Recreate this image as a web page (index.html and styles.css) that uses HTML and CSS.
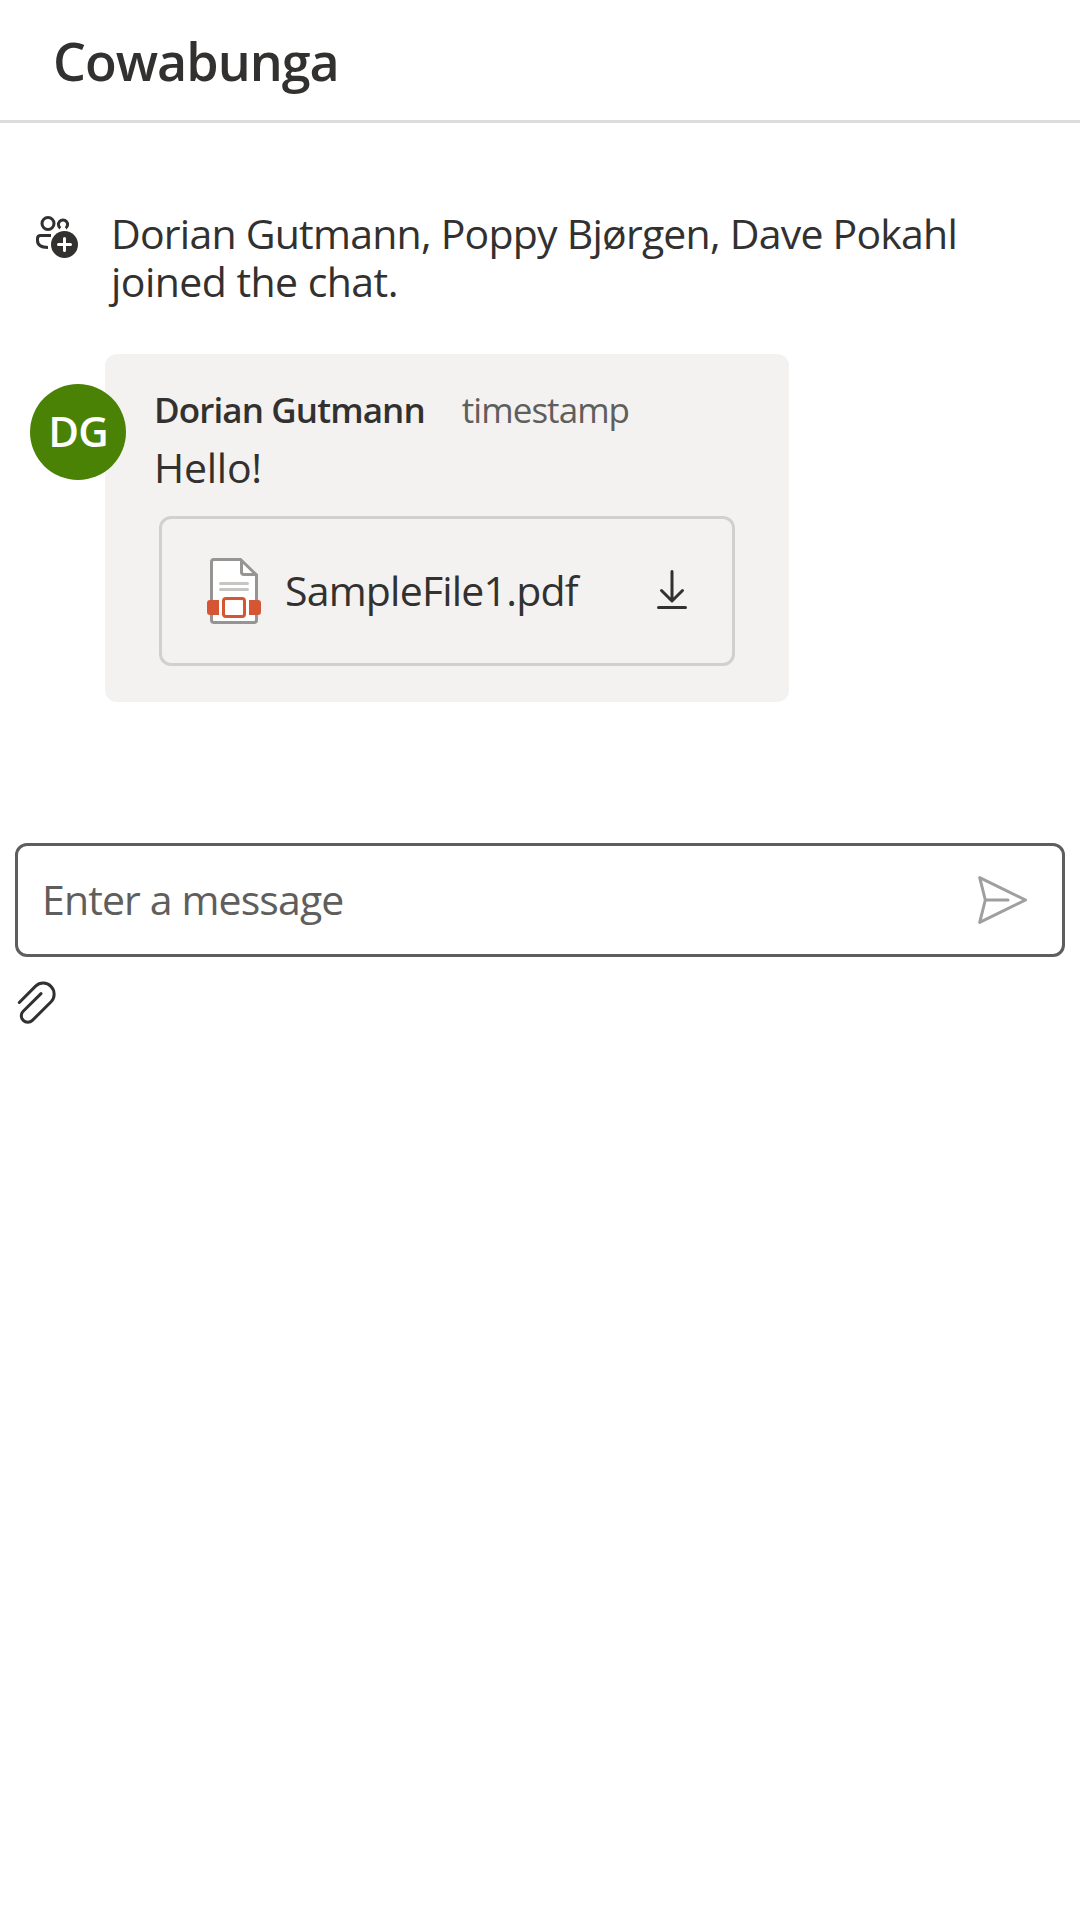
FILE: index.html
```html
<!DOCTYPE html>
<html lang="en">
<head>
  <meta charset="utf-8">
  <title>Cowabunga</title>
  <link rel="stylesheet" href="styles.css">
</head>
<body>
  <header class="header">
    <h1 class="title">Cowabunga</h1>
  </header>

  <main class="thread">
    <div class="system">
      <svg class="system-icon" width="42" height="42" viewBox="0 0 42 42" fill="none" stroke="#323130" stroke-width="3" stroke-linecap="round">
        <circle cx="12" cy="7.5" r="6"/>
        <path d="M24.3 12.2A4.6 4.6 0 1 1 29.7 12.2" stroke-linecap="butt"/>
        <path d="M15 19.5H4.5Q1.5 19.5 1.5 22.5V24.5Q1.5 31.3 12 31.5" stroke-linecap="butt"/>
        <circle cx="28.5" cy="28.5" r="13.5" fill="#323130" stroke="none"/>
        <path d="M22.5 28.5H34.5M28.5 22.5V34.5" stroke="#fff"/>
      </svg>
      <p class="system-text">
        <span class="names">Dorian Gutmann, Poppy Bjørgen, Dave Pokahl</span>
        <span class="joined">joined the chat.</span>
      </p>
    </div>

    <article class="message">
      <div class="avatar">DG</div>
      <div class="bubble">
        <div class="meta">
          <span class="author">Dorian Gutmann</span>
          <span class="time">timestamp</span>
        </div>
        <p class="body">Hello!</p>
        <div class="file">
          <svg width="54" height="66" viewBox="0 0 54 66" fill="none">
            <path d="M7 1.5H33.5L49.5 17V62Q49.5 64.5 47 64.5H7Q4.5 64.5 4.5 62V4Q4.5 1.5 7 1.5Z" fill="#fff" stroke="#979593" stroke-width="3"/>
            <path d="M34.5 2V14Q34.5 16.5 37 16.5H49" stroke="#979593" stroke-width="3"/>
            <path d="M13.5 25.5H40.5M13.5 31.5H40.5" stroke="#c8c6c4" stroke-width="3" stroke-linecap="round"/>
            <path d="M12 42H3Q0 42 0 45V54Q0 57 3 57H12ZM42 42H51Q54 42 54 45V54Q54 57 51 57H42Z" fill="#d65532"/>
            <rect x="16.5" y="40.5" width="21" height="18" rx="2.5" fill="#fff" stroke="#d65532" stroke-width="3"/>
          </svg>
          <span class="file-name">SampleFile1.pdf</span>
          <svg class="download" width="30" height="39" viewBox="0 0 30 39" fill="none" stroke="#323130" stroke-width="3" stroke-linecap="round" stroke-linejoin="round">
            <path d="M15 1.5V31M4.5 20.5L15 31L25.5 20.5M1.5 37.5H28.5"/>
          </svg>
        </div>
      </div>
    </article>
  </main>

  <footer class="composer">
    <div class="input">
      <span class="placeholder">Enter a message</span>
      <svg width="50" height="48" viewBox="0 0 50 48" fill="none" stroke="#a19f9d" stroke-width="3" stroke-linecap="round" stroke-linejoin="round">
        <path d="M1.7 1.6L47.5 24L1.7 46.4L7.3 24ZM7.3 24H30"/>
      </svg>
    </div>
    <svg class="attach" width="40" height="45" viewBox="0 0 40 45" fill="none" stroke="#323130" stroke-width="3" stroke-linecap="round">
      <path d="M2.3 22.5L18.6 6.1A11 11 0 0 1 34.1 21.7L15.4 40.4A6.5 6.5 0 0 1 6.2 31.2L24 13.6"/>
    </svg>
  </footer>
</body>
</html>
```
FILE: styles.css
```css
* {
  box-sizing: border-box;
}

body {
  margin: 0;
  background: #fff;
  color: #323130;
  font-family: "Segoe UI", "Open Sans", "Noto Sans", sans-serif;
  font-size: 41px;
}

p,
h1 {
  margin: 0;
}

svg {
  display: block;
  flex: none;
}

.header {
  height: 123px;
  padding: 0 53px;
  border-bottom: 3px solid #dcdcdc;
}

.title {
  font-size: 52px;
  font-weight: 600;
  line-height: 122px;
  letter-spacing: -1px;
}

.thread {
  padding-top: 86px;
}

.system {
  display: flex;
  align-items: flex-start;
  gap: 33px;
  padding-left: 36px;
}

.system-icon {
  margin-top: 7px;
}

.system-text {
  line-height: 48px;
  white-space: nowrap;
}

.system-text span {
  display: block;
}

.names {
  letter-spacing: -0.77px;
}

.joined {
  letter-spacing: -0.55px;
}

.message {
  display: flex;
  align-items: flex-start;
  margin-top: 49px;
  padding-left: 30px;
}

.avatar {
  z-index: 1;
  flex: none;
  width: 96px;
  height: 96px;
  margin: 30px -21px 0 0;
  border-radius: 50%;
  background: #498205;
  color: #fff;
  font-size: 42px;
  font-weight: 600;
  line-height: 94px;
  letter-spacing: -0.8px;
  text-align: center;
}

.bubble {
  width: 684px;
  height: 348px;
  padding: 32px 54px 36px 49px;
  border-radius: 12px;
  background: #f3f2f1;
}

.meta {
  display: flex;
  gap: 37px;
  font-size: 35px;
  line-height: 48px;
}

.author {
  font-weight: 600;
  letter-spacing: -0.88px;
}

.time {
  color: #605e5c;
  letter-spacing: -0.95px;
}

.body {
  margin-top: 5px;
  line-height: 56px;
  letter-spacing: -0.25px;
}

.file {
  display: flex;
  align-items: center;
  height: 150px;
  margin: 21px 0 0 5px;
  padding: 0 45px;
  border: 3px solid #d0d0d0;
  border-radius: 12px;
}

.file-name {
  margin-left: 24px;
  padding-bottom: 2px;
  letter-spacing: -0.8px;
}

.download {
  margin: 0 0 3px auto;
}

.composer {
  padding: 141px 15px 0;
}

.input {
  display: flex;
  align-items: center;
  justify-content: space-between;
  height: 114px;
  padding: 0 34px 0 24px;
  border: 3px solid #605e5c;
  border-radius: 12px;
}

.placeholder {
  padding-bottom: 2px;
  color: #605e5c;
  letter-spacing: -0.87px;
}

.attach {
  margin: 23px 0 0 2px;
}
```
